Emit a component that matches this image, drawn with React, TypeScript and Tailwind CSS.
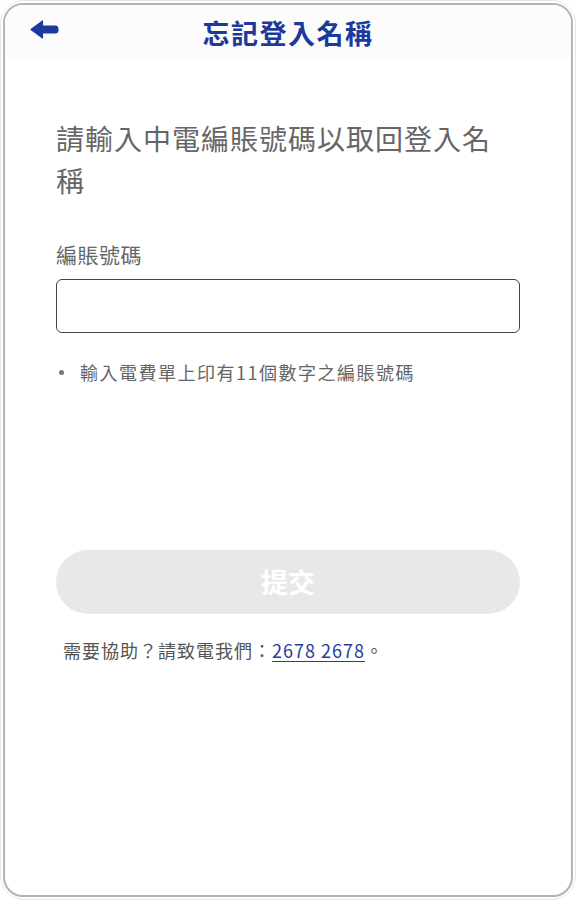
export default function App() {
  return (
    <div
      className="w-[576px] h-[900px] bg-white rounded-[24px] border border-[#e6e6e6] p-[2px]"
      style={{ fontFamily: '"Noto Sans CJK TC", "Noto Sans", sans-serif' }}
    >
      <div className="h-full rounded-[20px] border-2 border-[#b4b4b4] overflow-hidden flex flex-col bg-white">
        <header className="relative h-[54px] bg-[#fcfcfc] flex items-center justify-center shrink-0">
          <button className="absolute left-[25px] top-[15px]" aria-label="back">
            <svg width="29" height="19" viewBox="0 0 29 19">
              <path
                d="M1 9.5 L12.5 1 L12.5 6 L25.5 6 Q28 6 28 9.5 Q28 13 25.5 13 L12.5 13 L12.5 18 Z"
                fill="#1b3a9c"
                strokeLinejoin="round"
                stroke="#1b3a9c"
                strokeWidth="1.2"
              />
            </svg>
          </button>
          <h1 className="text-[27px] font-bold text-[#1b3a9c] tracking-[1.5px] leading-none">
            忘記登入名稱
          </h1>
        </header>

        <main className="flex-1 px-[51px] pt-[58px]">
          <p className="max-w-[450px] text-[28px] leading-[42px] text-[#666] tracking-[1px]">
            請輸入中電編賬號碼以取回登入名稱
          </p>

          <label className="block mt-[38px] text-[21px] text-[#666] leading-[30px] tracking-[0.5px]">
            編賬號碼
          </label>
          <input
            type="text"
            className="mt-[10px] w-full h-[54px] rounded-[6px] border-[1.5px] border-[#444] bg-white px-3 text-[18px] outline-none"
          />

          <ul className="mt-[26px] flex flex-col">
            <li className="flex items-center text-[18px] text-[#666] leading-[26px] tracking-[1.5px]">
              <span className="w-[24px] flex pl-[3px]">
                <span className="w-[5px] h-[5px] rounded-full bg-[#777]" />
              </span>
              <span>輸入電費單上印有11個數字之編賬號碼</span>
            </li>
          </ul>

          <button
            disabled
            className="mt-[165px] w-full h-[64px] rounded-full bg-[#e8e8e8] text-white text-[27px] font-bold"
          >
            提交
          </button>

          <p className="mt-[22px] pl-[7px] text-[18px] text-[#555] leading-[28px] tracking-[1px]">
            需要協助？請致電我們：
            <a href="#" className="text-[#1f3ea0] underline underline-offset-[3px]">
              2678 2678
            </a>
            。
          </p>
        </main>
      </div>
    </div>
  );
}
